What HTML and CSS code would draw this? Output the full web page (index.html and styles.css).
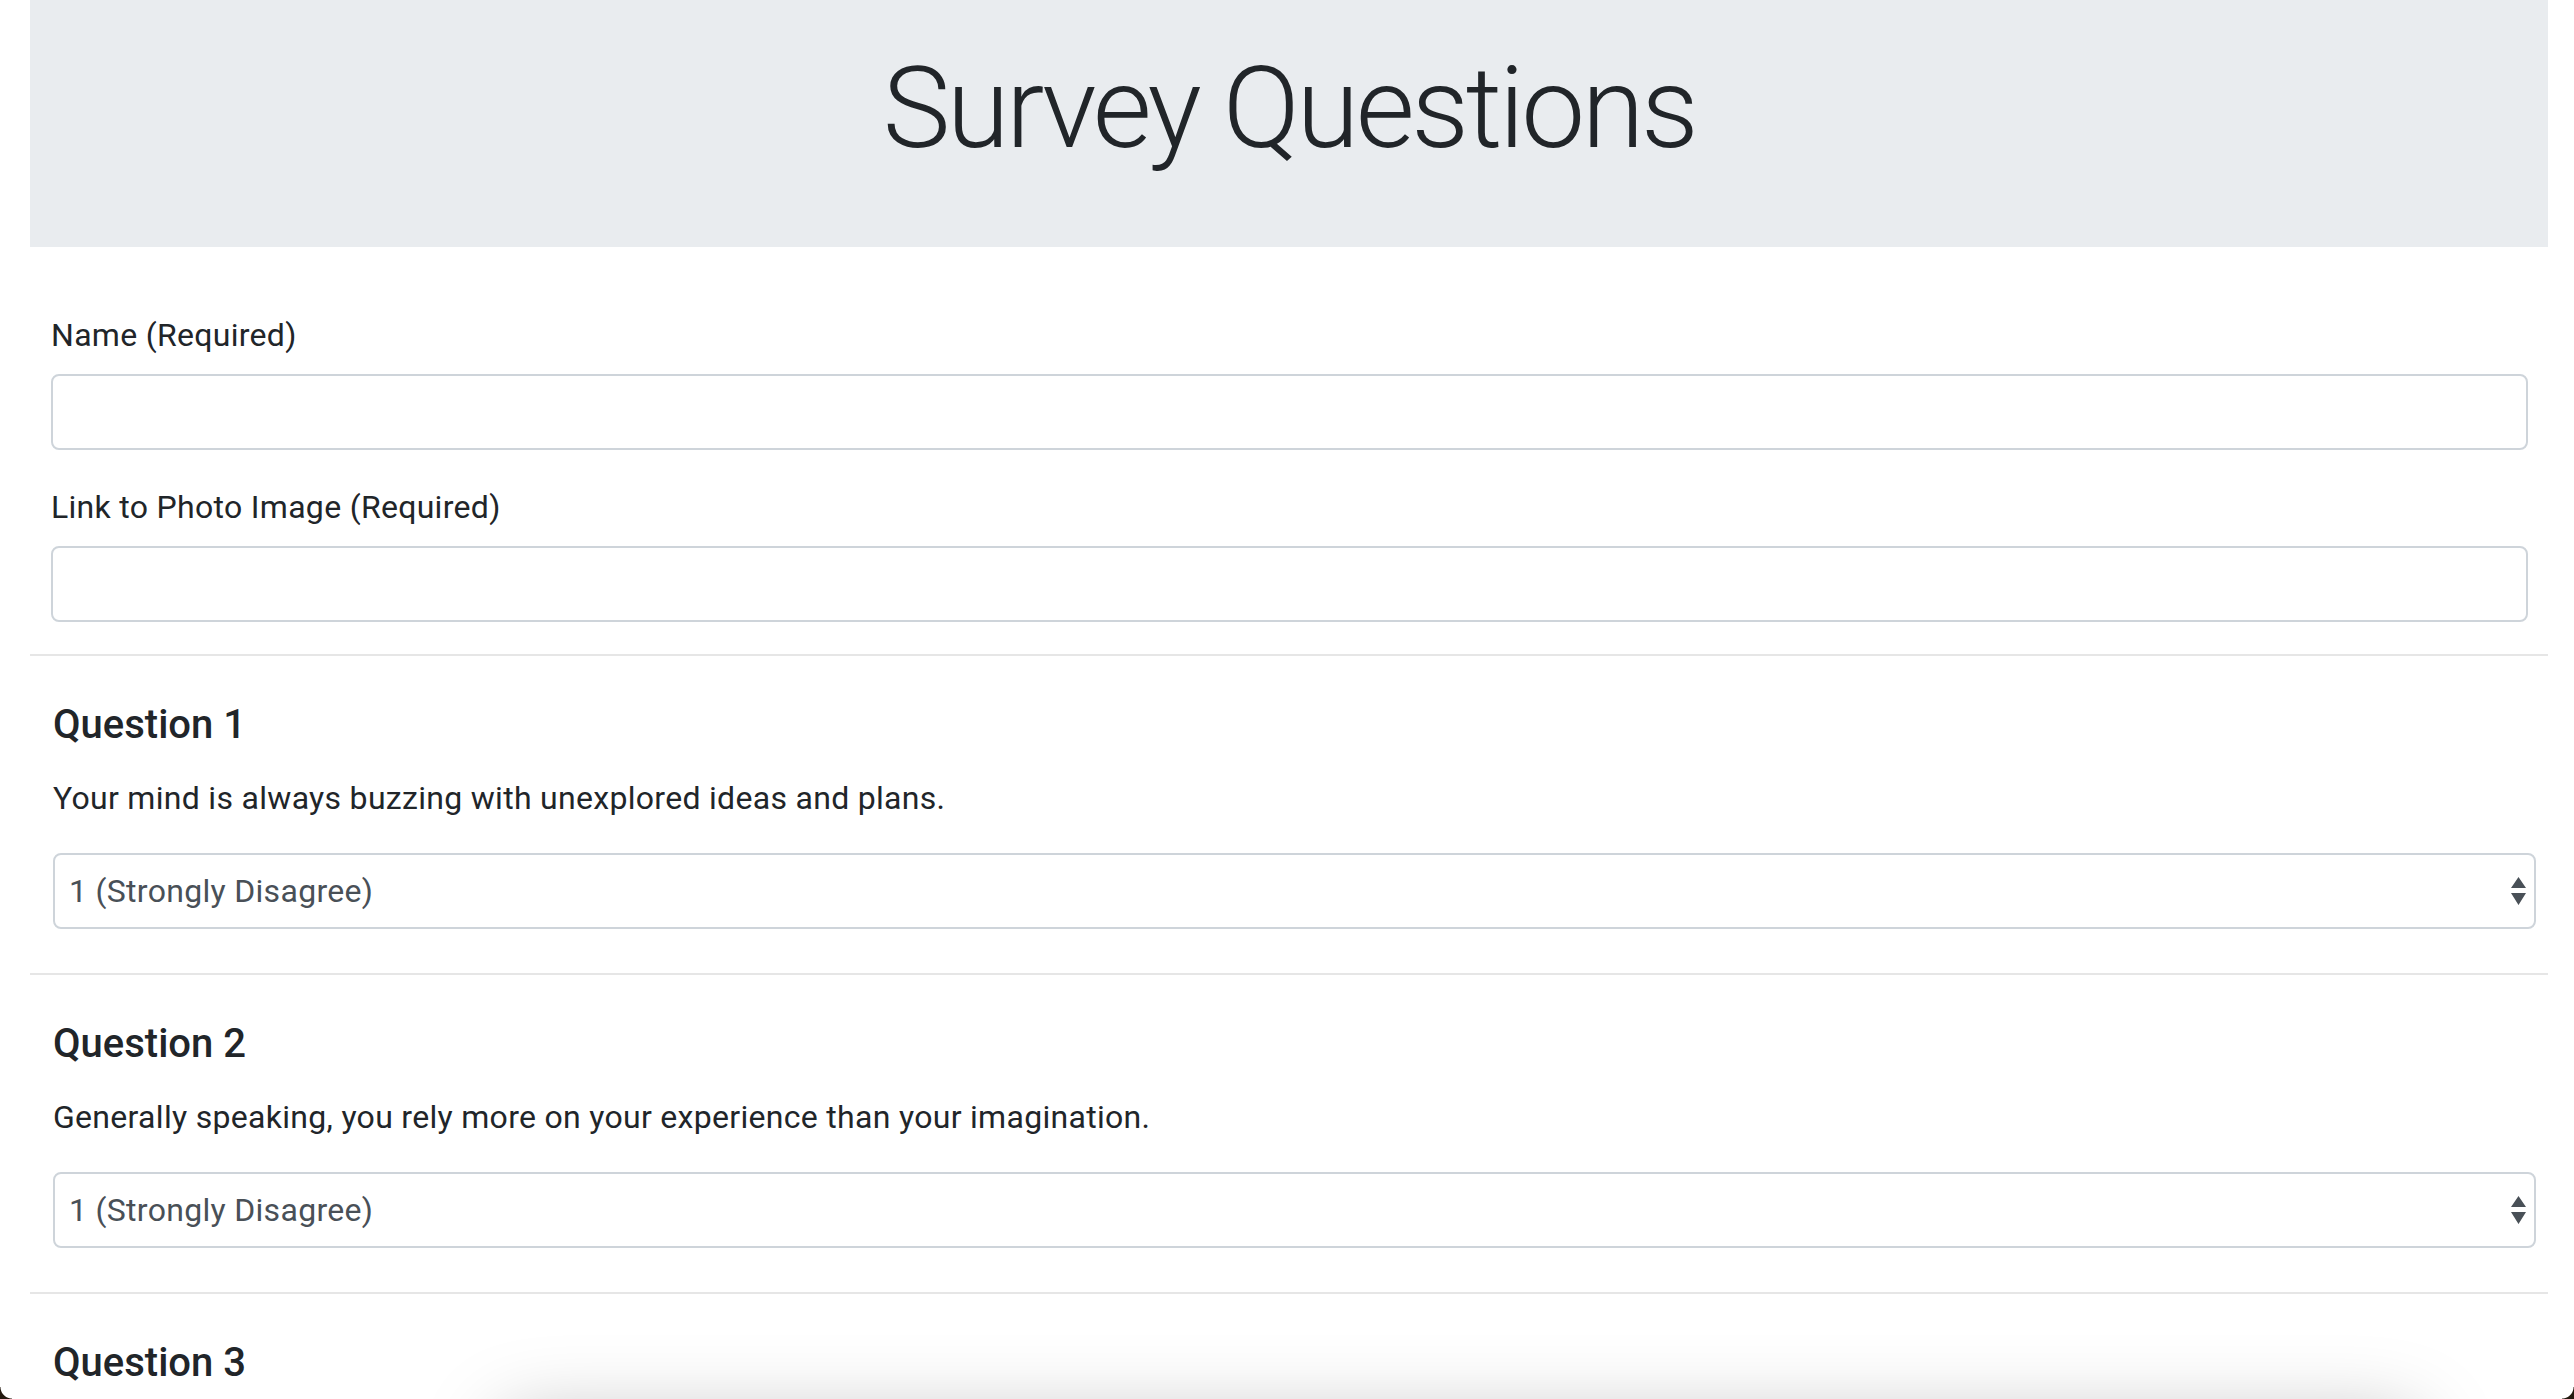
FILE: index.html
```html
<!DOCTYPE html>
<html lang="en">
<head>
<meta charset="utf-8">
<title>Survey Questions</title>
<link rel="stylesheet" href="styles.css">
</head>
<body>
<div class="page">
  <header class="jumbotron">
    <h1 class="display">Survey Questions</h1>
  </header>
  <form class="survey">
    <div class="fields">
      <div class="field">
        <label for="name">Name (Required)</label>
        <input id="name" type="text" class="control">
      </div>
      <div class="field">
        <label for="photo">Link to Photo Image (Required)</label>
        <input id="photo" type="text" class="control">
      </div>
    </div>
    <section class="question">
      <h5>Question 1</h5>
      <p>Your mind is always buzzing with unexplored ideas and plans.</p>
      <div class="select-wrap">
        <select class="control select">
          <option>1 (Strongly Disagree)</option>
          <option>2</option>
          <option>3</option>
          <option>4</option>
          <option>5 (Strongly Agree)</option>
        </select>
        <svg class="arrows" viewBox="0 0 15 28" aria-hidden="true"><path d="M7.5 0 L15 11 L0 11 Z M0 16 L15 16 L7.5 28 Z" fill="#495057"/></svg>
      </div>
    </section>
    <section class="question">
      <h5>Question 2</h5>
      <p>Generally speaking, you rely more on your experience than your imagination.</p>
      <div class="select-wrap">
        <select class="control select">
          <option>1 (Strongly Disagree)</option>
          <option>2</option>
          <option>3</option>
          <option>4</option>
          <option>5 (Strongly Agree)</option>
        </select>
        <svg class="arrows" viewBox="0 0 15 28" aria-hidden="true"><path d="M7.5 0 L15 11 L0 11 Z M0 16 L15 16 L7.5 28 Z" fill="#495057"/></svg>
      </div>
    </section>
    <section class="question">
      <h5>Question 3</h5>
      <p>You find it easy to stay relaxed and focused even when there is some pressure.</p>
      <div class="select-wrap">
        <select class="control select">
          <option>1 (Strongly Disagree)</option>
          <option>2</option>
          <option>3</option>
          <option>4</option>
          <option>5 (Strongly Agree)</option>
        </select>
        <svg class="arrows" viewBox="0 0 15 28" aria-hidden="true"><path d="M7.5 0 L15 11 L0 11 Z M0 16 L15 16 L7.5 28 Z" fill="#495057"/></svg>
      </div>
    </section>
  </form>
</div>
<div class="bottom-shadow"></div>
<div class="corner corner-left"></div>
<div class="corner corner-right"></div>
</body>
</html>
```

FILE: styles.css
```css
html, body {
  margin: 0;
  padding: 0;
  overflow: hidden;
  background: #fff;
}

body {
  font-family: Roboto, "Liberation Sans", Arial, sans-serif;
  font-size: 32px;
  line-height: 1.5;
  letter-spacing: 0.3px;
  color: #212529;
}

.page {
  margin: 0 26px 0 30px;
}

.jumbotron {
  height: 247px;
  box-sizing: border-box;
  background: #e9ecef;
  margin-bottom: 63px;
  padding-top: 40px;
  text-align: center;
}

.display {
  margin: 0;
  font-size: 114px;
  font-weight: 300;
  line-height: 1.2;
  letter-spacing: -3.4px;
  color: #212529;
}

.fields {
  padding: 0 20px 32px 21px;
}

.field + .field {
  margin-top: 32px;
}

.field label {
  display: block;
  margin-bottom: 16px;
  padding-top: 1px;
}

.control {
  display: block;
  width: 100%;
  height: 76px;
  box-sizing: border-box;
  border: 2px solid #ced4da;
  border-radius: 8px;
  background: #fff;
  font: inherit;
  letter-spacing: 0.3px;
  color: #495057;
  padding: 0 24px;
  margin: 0;
  outline: none;
}

.field .control {
  margin-top: -1px;
}

.question {
  border-top: 2px solid #e6e6e6;
  padding: 45px 12px 44px 23px;
}

.question h5 {
  margin: 0 0 25px;
  font-size: 40px;
  font-weight: 500;
  line-height: 1.2;
  letter-spacing: 0;
}

.question p {
  margin: 0 0 31px;
}

.select-wrap {
  position: relative;
}

.select {
  -webkit-appearance: none;
  appearance: none;
  padding: 0 40px 0 14px;
}

.arrows {
  position: absolute;
  right: 10px;
  top: 24px;
  width: 15px;
  height: 28px;
  pointer-events: none;
}

.bottom-shadow {
  position: fixed;
  left: 500px;
  width: 1920px;
  top: 1418px;
  height: 200px;
  border-radius: 24px;
  background: #fff;
  box-shadow: 0 0 80px 0 rgba(0, 0, 0, 0.26);
  pointer-events: none;
}

.corner {
  position: fixed;
  bottom: 0;
  width: 12px;
  height: 12px;
  pointer-events: none;
}

.corner-left {
  left: 0;
  background: radial-gradient(circle at 100% 0, transparent 11px, #24190f 12px);
}

.corner-right {
  right: 0;
  background: radial-gradient(circle at 0 0, transparent 11px, #24190f 12px);
}
```
